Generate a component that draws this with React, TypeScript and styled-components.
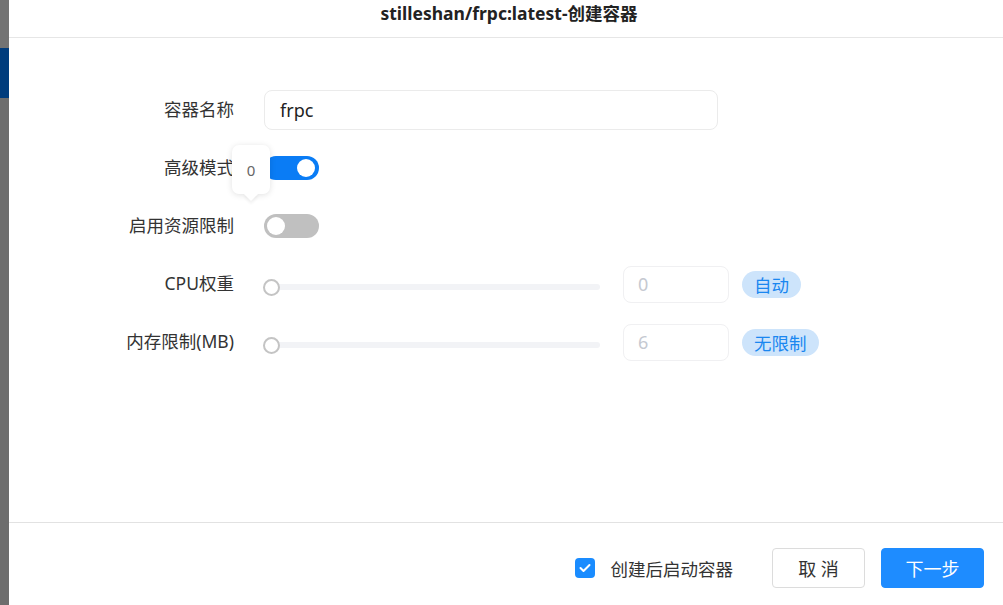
import React from "react";
import styled, { createGlobalStyle } from "styled-components";

const Global = createGlobalStyle`
  html, body { margin: 0; padding: 0; width: 1003px; height: 605px; overflow: hidden; background: #fff; }
  * { box-sizing: border-box; }
  body { font-family: "Noto Sans", "Noto Sans CJK SC", sans-serif; color: #333; }
`;

const Page = styled.div`
  display: flex;
  width: 1003px;
  height: 605px;
`;

const Strip = styled.div`
  width: 9px;
  display: flex;
  flex-direction: column;
`;

const StripPart = styled.div<{ $h?: number; $c: string }>`
  background: ${(p) => p.$c};
  ${(p) => (p.$h ? `height: ${p.$h}px;` : "flex: 1;")}
`;

const Dialog = styled.div`
  flex: 1;
  display: flex;
  flex-direction: column;
  background: #fff;
`;

const Header = styled.div`
  height: 38px;
  border-bottom: 1px solid #e6e6e6;
  display: flex;
  align-items: center;
  justify-content: center;
  padding-bottom: 12px;
  padding-left: 6px;
`;

const Title = styled.div`
  font-family: "Noto Sans", "Noto Sans CJK SC", sans-serif;
  font-weight: 700;
  font-size: 17.5px;
  color: #222;
`;

const Body = styled.div`
  flex: 1;
  padding-top: 52px;
  display: flex;
  flex-direction: column;
  gap: 18px;
`;

const Row = styled.div`
  display: grid;
  grid-template-columns: 225px 1fr;
  column-gap: 30px;
  height: 40px;
  align-items: center;
`;

const Label = styled.div`
  text-align: right;
  font-size: 17.5px;
  color: #333;
  white-space: nowrap;
  margin-top: -3px;
`;

const Control = styled.div`
  position: relative;
  display: flex;
  align-items: center;
  height: 40px;
`;

const TextInput = styled.div`
  width: 454px;
  height: 40px;
  border: 1px solid #ebebeb;
  border-radius: 8px;
  padding-left: 15px;
  display: flex;
  align-items: center;
  font-size: 18px;
  color: #222;
`;

const Switch = styled.div<{ $on: boolean }>`
  width: 55px;
  height: 24px;
  border-radius: 12px;
  background: ${(p) => (p.$on ? "#0a7cf5" : "#c0c0c0")};
  position: relative;
  &::after {
    content: "";
    position: absolute;
    top: 3px;
    ${(p) => (p.$on ? "right: 4px;" : "left: 3px;")}
    width: 18px;
    height: 18px;
    border-radius: 50%;
    background: #fff;
  }
`;

const Tooltip = styled.div`
  position: absolute;
  left: -32px;
  top: -3px;
  width: 38px;
  height: 49px;
  background: #fff;
  border-radius: 7px;
  box-shadow: 0 1px 6px rgba(0, 0, 0, 0.12);
  display: flex;
  align-items: center;
  justify-content: center;
  font-size: 15px;
  color: #666;
  z-index: 2;
  &::after {
    content: "";
    position: absolute;
    bottom: -5px;
    left: 50%;
    margin-left: -5px;
    width: 10px;
    height: 10px;
    background: #fff;
    transform: rotate(45deg);
    box-shadow: 2px 2px 3px rgba(0, 0, 0, 0.06);
  }
`;

const Slider = styled.div`
  position: relative;
  width: 336px;
  height: 17px;
  margin-top: 6px;
  display: flex;
  align-items: center;
`;

const Track = styled.div`
  margin-left: 6px;
  flex: 1;
  height: 6px;
  border-radius: 3px;
  background: #f2f3f6;
`;

const Handle = styled.div`
  position: absolute;
  left: -1px;
  top: 0;
  width: 17px;
  height: 17px;
  border-radius: 50%;
  border: 2px solid #c4c4c4;
  background: #fff;
`;

const NumInput = styled.div`
  margin-left: 23px;
  width: 106px;
  height: 37px;
  border: 1px solid #f0f0f2;
  border-radius: 8px;
  padding-left: 14px;
  display: flex;
  align-items: center;
  font-size: 18px;
  color: #c5c9d1;
`;

const Tag = styled.div`
  margin-left: 13px;
  height: 27px;
  padding: 0 12px;
  border-radius: 14px;
  background: #cde4fb;
  color: #1a87f0;
  font-size: 17.5px;
  display: flex;
  align-items: center;
`;

const Footer = styled.div`
  height: 83px;
  border-top: 1px solid #e2e2e2;
  display: flex;
  justify-content: flex-end;
  align-items: flex-start;
  padding: 25px 19px 0 0;
`;

const CheckWrap = styled.div`
  height: 40px;
  display: flex;
  align-items: center;
  gap: 16px;
  margin-right: 23px;
  font-size: 17.5px;
  color: #333;
`;

const CheckBox = styled.div`
  width: 20px;
  height: 20px;
  border-radius: 4px;
  background: #1a8cff;
  display: flex;
  align-items: center;
  justify-content: center;
`;

const Button = styled.div<{ $primary?: boolean; $w: number }>`
  width: ${(p) => p.$w}px;
  height: 40px;
  border-radius: 4px;
  display: flex;
  align-items: center;
  justify-content: center;
  font-size: 18px;
  margin-left: 16px;
  ${(p) =>
    p.$primary
      ? "background: #1e8cff; color: #fff; border: 1px solid #1e8cff;"
      : "background: #fff; color: #333; border: 1px solid #dcdcdc;"}
`;

export default function App() {
  return (
    <Page>
      <Global />
      <Strip>
        <StripPart $h={48} $c="#737373" />
        <StripPart $h={50} $c="#003c7c" />
        <StripPart $c="#6d6d6d" />
      </Strip>
      <Dialog>
        <Header>
          <Title>stilleshan/frpc:latest-创建容器</Title>
        </Header>
        <Body>
          <Row>
            <Label>容器名称</Label>
            <Control>
              <TextInput>frpc</TextInput>
            </Control>
          </Row>
          <Row>
            <Label>高级模式</Label>
            <Control>
              <Switch $on />
              <Tooltip>0</Tooltip>
            </Control>
          </Row>
          <Row>
            <Label>启用资源限制</Label>
            <Control>
              <Switch $on={false} />
            </Control>
          </Row>
          <Row>
            <Label>CPU权重</Label>
            <Control>
              <Slider>
                <Track />
                <Handle />
              </Slider>
              <NumInput>0</NumInput>
              <Tag>自动</Tag>
            </Control>
          </Row>
          <Row>
            <Label>内存限制(MB)</Label>
            <Control>
              <Slider>
                <Track />
                <Handle />
              </Slider>
              <NumInput>6</NumInput>
              <Tag>无限制</Tag>
            </Control>
          </Row>
        </Body>
        <Footer>
          <CheckWrap>
            <CheckBox>
              <svg width="12" height="10" viewBox="0 0 12 10">
                <path d="M1.5 5 L4.5 8 L10.5 2" stroke="#fff" strokeWidth="2" fill="none" strokeLinecap="round" strokeLinejoin="round" />
              </svg>
            </CheckBox>
            创建后启动容器
          </CheckWrap>
          <Button $w={93}>取 消</Button>
          <Button $w={103} $primary>
            下一步
          </Button>
        </Footer>
      </Dialog>
    </Page>
  );
}
